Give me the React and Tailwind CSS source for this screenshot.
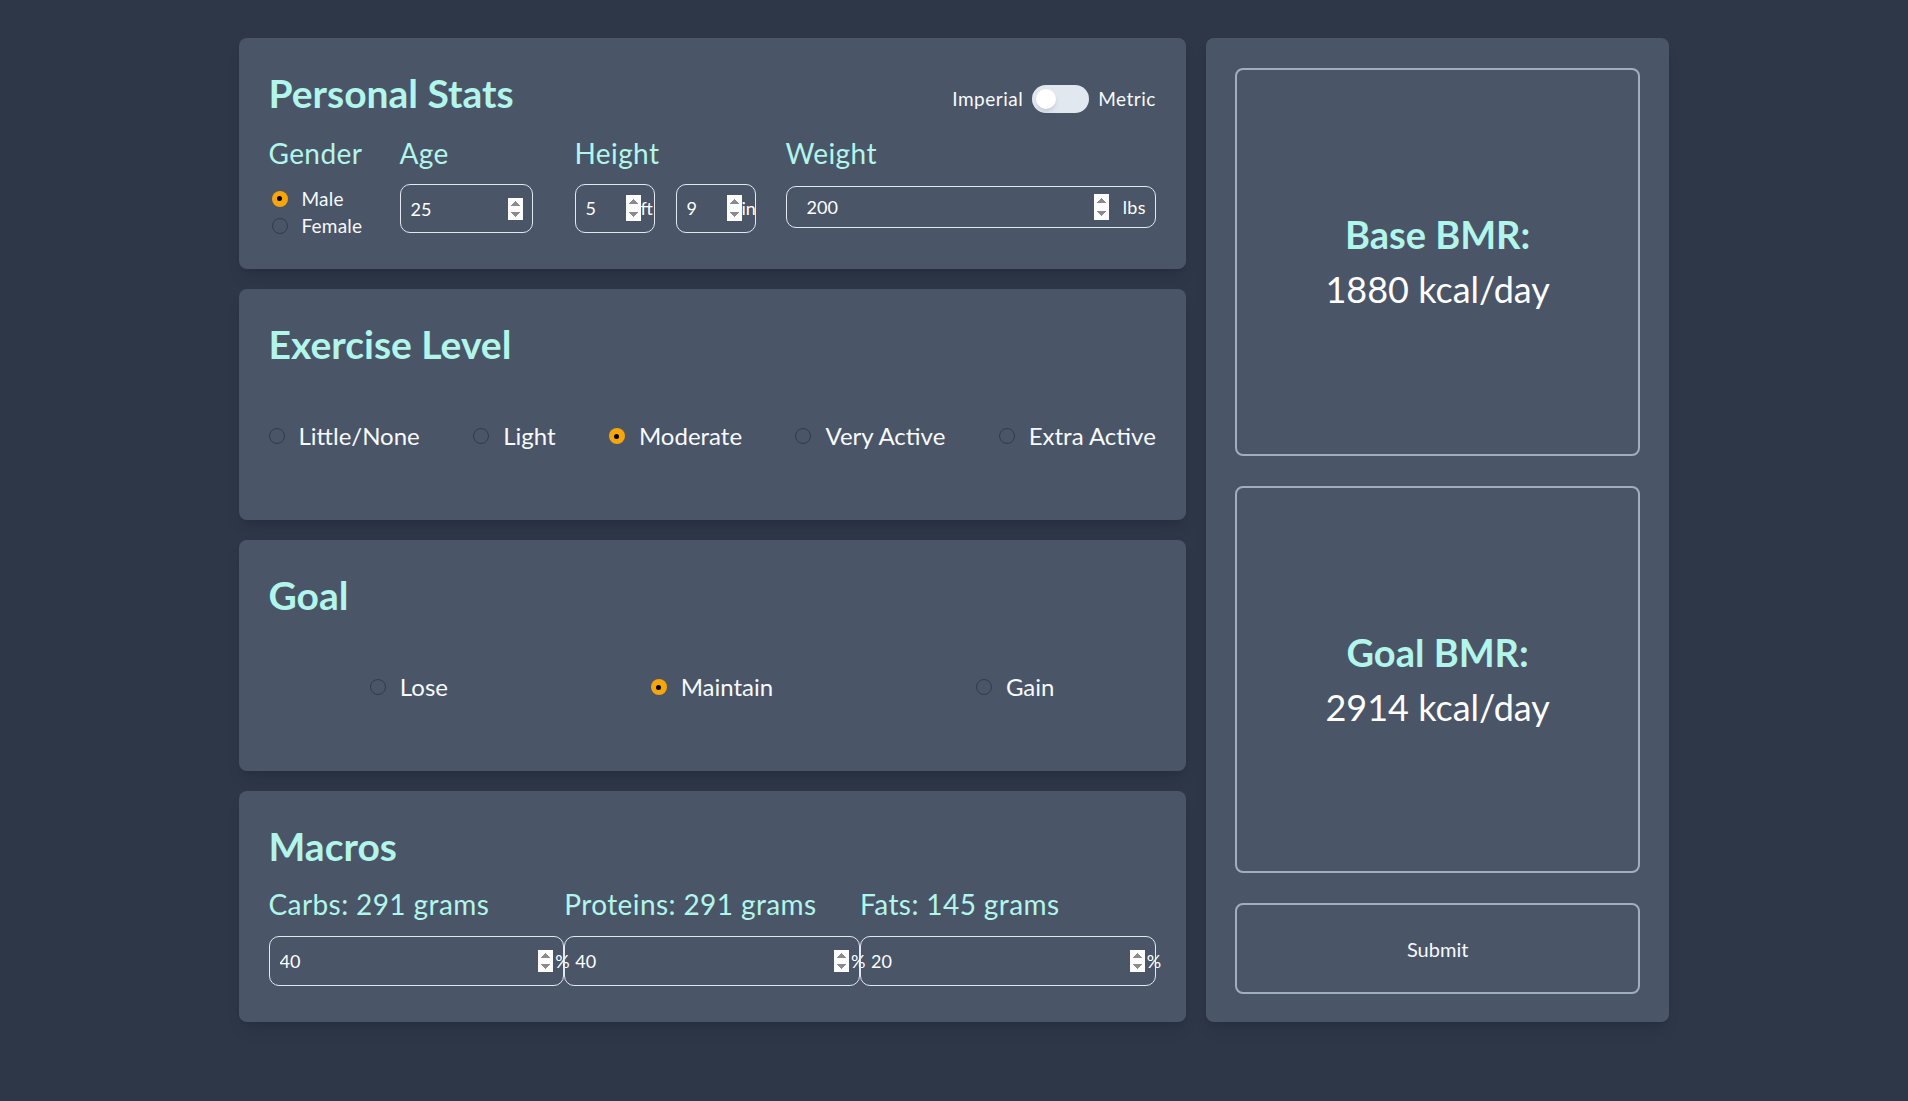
import { useState } from 'react';

const exerciseLevels = ['Little/None', 'Light', 'Moderate', 'Very Active', 'Extra Active'];
const goals = ['Lose', 'Maintain', 'Gain'];

// radio dot, drawn by hand so the checked state matches the orange/black look
function RadioDot({ checked, onClick }) {
  return (
    <button
      type="button"
      onClick={onClick}
      className={
        checked
          ? 'flex h-4 w-4 shrink-0 items-center justify-center rounded-full bg-[#f6a50b]'
          : 'flex h-4 w-4 shrink-0 items-center justify-center rounded-full border-[1.5px] border-[#323b4c]'
      }
    >
      {checked && <span className="h-[5px] w-[5px] rounded-full bg-black" />}
    </button>
  );
}

function Card({ children }) {
  return (
    <section className="h-[231px] rounded-lg bg-[#4a5568] px-[30px] pt-[31px] shadow-lg">
      {children}
    </section>
  );
}

function Heading({ children }) {
  return <h2 className="text-[39px] font-bold leading-[48px] text-[#b2f5ea]">{children}</h2>;
}

function Label({ children }) {
  return <div className="text-[28px] leading-[32px] tracking-[0.4px] text-[#b2f5ea]">{children}</div>;
}

const spin = '[&::-webkit-inner-spin-button]:opacity-100';

export default function App() {
  const [metric, setMetric] = useState(false);
  const [gender, setGender] = useState('Male');
  const [age, setAge] = useState(25);
  const [feet, setFeet] = useState(5);
  const [inches, setInches] = useState(9);
  const [weight, setWeight] = useState(200);
  const [exercise, setExercise] = useState('Moderate');
  const [goal, setGoal] = useState('Maintain');
  const [macros, setMacros] = useState({ carbs: 40, proteins: 40, fats: 20 });

  const goalKcal = 2914;

  return (
    <div className="min-h-screen bg-[#2d3748] font-['Lato',sans-serif]">
      <div className="mx-auto grid w-3/4 grid-cols-3 gap-5 pt-[38px]">
        <div className="col-span-2 flex flex-col gap-5">
          {/* Personal stats */}
          <Card>
            <div className="flex items-start justify-between">
              <Heading>Personal Stats</Heading>
              <div className="mt-[16px] flex items-center gap-[9px] text-[19px] tracking-[0.5px] text-[#f7fafc]">
                <span>Imperial</span>
                <button
                  type="button"
                  onClick={() => setMetric(!metric)}
                  className="flex h-[28px] w-[57px] items-center rounded-full bg-[#e2e8f0] px-1"
                >
                  <span className="h-5 w-5 rounded-full bg-white shadow-md" />
                </button>
                <span>Metric</span>
              </div>
            </div>

            <div className="mt-[20px] flex">
              <div className="w-[131px]">
                <Label>Gender</Label>
                <div className="mt-4 flex flex-col pl-[3px] text-[19px] leading-[27px] tracking-[0.2px] text-[#f7fafc]">
                  {['Male', 'Female'].map((g) => (
                    <label key={g} className="flex items-center gap-[14px]">
                      <RadioDot checked={gender === g} onClick={() => setGender(g)} />
                      {g}
                    </label>
                  ))}
                </div>
              </div>

              <div className="w-[175px]">
                <Label>Age</Label>
                <input
                  type="number"
                  value={age}
                  onChange={(e) => setAge(e.target.value)}
                  className={`mt-[15px] h-[49px] w-[133px] rounded-[10px] border border-[#e2e8f0] bg-transparent pl-[10px] pr-[9px] text-[18px] text-white outline-none ${spin}`}
                />
              </div>

              <div className="w-[211px]">
                <Label>Height</Label>
                <div className="mt-[15px] flex gap-[21px] text-[18px] text-white">
                  <div className="flex h-[49px] w-[80px] items-center rounded-[10px] border border-[#e2e8f0]">
                    <input
                      type="number"
                      value={feet}
                      onChange={(e) => setFeet(e.target.value)}
                      className={`w-[65px] bg-transparent pl-[10px] outline-none ${spin}`}
                    />
                    <span>ft</span>
                  </div>
                  <div className="flex h-[49px] w-[80px] items-center rounded-[10px] border border-[#e2e8f0]">
                    <input
                      type="number"
                      value={inches}
                      onChange={(e) => setInches(e.target.value)}
                      className={`w-[65px] bg-transparent pl-[10px] outline-none ${spin}`}
                    />
                    <span>in</span>
                  </div>
                </div>
              </div>

              <div className="flex-1">
                <Label>Weight</Label>
                <div className="mt-[17px] flex h-[42px] items-center rounded-[10px] border border-[#e2e8f0] pl-[10px] pr-[9px] text-[18px] text-white">
                  <input
                    type="number"
                    value={weight}
                    onChange={(e) => setWeight(e.target.value)}
                    className={`min-w-0 flex-1 bg-transparent pl-[10px] outline-none ${spin}`}
                  />
                  <span className="ml-[14px] tracking-[0.3px]">lbs</span>
                </div>
              </div>
            </div>
          </Card>

          {/* Exercise */}
          <Card>
            <Heading>Exercise Level</Heading>
            <div className="mt-[53px] flex h-[30px] items-center justify-between text-[24px] text-[#f7fafc]">
              {exerciseLevels.map((lvl) => (
                <label key={lvl} className="flex items-center gap-[14px]">
                  <RadioDot checked={exercise === lvl} onClick={() => setExercise(lvl)} />
                  {lvl}
                </label>
              ))}
            </div>
          </Card>

          {/* Goal */}
          <Card>
            <Heading>Goal</Heading>
            <div className="mt-[53px] flex h-[30px] items-center justify-around text-[24px] text-[#f7fafc]">
              {goals.map((g) => (
                <label key={g} className="flex items-center gap-[14px]">
                  <RadioDot checked={goal === g} onClick={() => setGoal(g)} />
                  {g}
                </label>
              ))}
            </div>
          </Card>

          {/* Macros */}
          <Card>
            <Heading>Macros</Heading>
            <div className="mt-[18px] grid grid-cols-3">
              {[
                ['carbs', 'Carbs', 291],
                ['proteins', 'Proteins', 291],
                ['fats', 'Fats', 145],
              ].map(([key, name, g]) => (
                <div key={key}>
                  <Label>
                    {name}: {g} grams
                  </Label>
                  <div className="relative mt-4">
                    <input
                      type="number"
                      value={macros[key]}
                      onChange={(e) => setMacros({ ...macros, [key]: e.target.value })}
                      className={`h-[50px] w-full rounded-[10px] border border-[#e2e8f0] bg-transparent pl-[10px] pr-[10px] text-[18px] text-white outline-none ${spin}`}
                    />
                    <span className="absolute left-[calc(100%-9px)] top-1/2 -translate-y-1/2 text-[18px] text-white">%</span>
                  </div>
                </div>
              ))}
            </div>
          </Card>
        </div>

        {/* Results */}
        <aside className="flex flex-col gap-[30px] rounded-lg bg-[#4a5568] px-[29px] pb-[28px] pt-[30px] shadow-lg">
          <div className="flex h-[388px] flex-col items-center justify-center rounded-lg border-2 border-[#a0aec0] text-center">
            <div className="text-[38px] font-bold leading-[55px] text-[#b2f5ea]">Base BMR:</div>
            <div className="text-[36px] leading-[55px] text-white">1880 kcal/day</div>
          </div>
          <div className="flex h-[387px] flex-col items-center justify-center rounded-lg border-2 border-[#a0aec0] text-center">
            <div className="text-[38px] font-bold leading-[55px] text-[#b2f5ea]">Goal BMR:</div>
            <div className="text-[36px] leading-[55px] text-white">{goalKcal} kcal/day</div>
          </div>
          <button
            type="button"
            className="flex-1 rounded-lg border-2 border-[#a0aec0] text-[20px] text-[#f7fafc]"
          >
            Submit
          </button>
        </aside>
      </div>
    </div>
  );
}
